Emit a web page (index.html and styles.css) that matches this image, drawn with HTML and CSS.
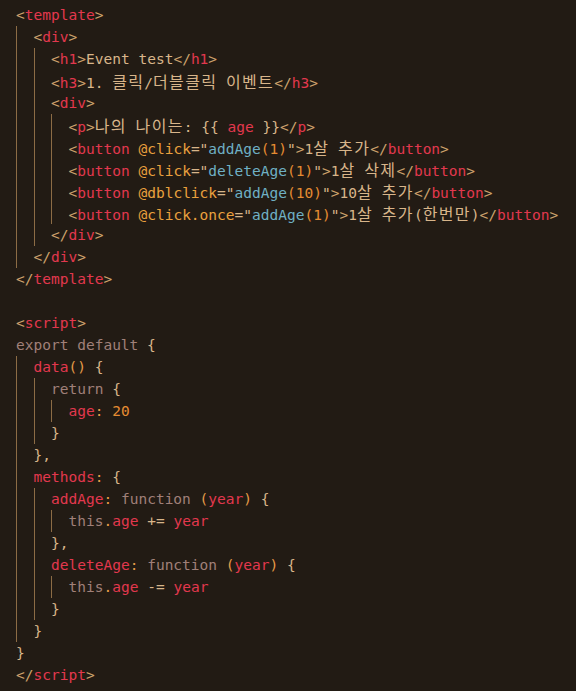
FILE: index.html
```html
<!DOCTYPE html>
<html lang="ko">
<head>
<meta charset="utf-8">
<title>Event test</title>
<link rel="stylesheet" href="styles.css">
</head>
<body>
<div class="editor">
<div class="line"><span class="b">&lt;</span><span class="t">template</span><span class="b">&gt;</span></div>
<div class="line"><span class="ind"></span><span class="b">&lt;</span><span class="t">div</span><span class="b">&gt;</span></div>
<div class="line"><span class="ind"></span><span class="ind"></span><span class="b">&lt;</span><span class="t">h1</span><span class="b">&gt;</span><span class="x">Event test</span><span class="b">&lt;/</span><span class="t">h1</span><span class="b">&gt;</span></div>
<div class="line"><span class="ind"></span><span class="ind"></span><span class="b">&lt;</span><span class="t">h3</span><span class="b">&gt;</span><span class="x">1. <span class="ko">클릭</span>/<span class="ko">더블클릭</span> <span class="ko">이벤트</span></span><span class="b">&lt;/</span><span class="t">h3</span><span class="b">&gt;</span></div>
<div class="line"><span class="ind"></span><span class="ind"></span><span class="b">&lt;</span><span class="t">div</span><span class="b">&gt;</span></div>
<div class="line"><span class="ind"></span><span class="ind"></span><span class="ind"></span><span class="b">&lt;</span><span class="t">p</span><span class="b">&gt;</span><span class="x"><span class="ko">나의</span> <span class="ko">나이는</span>: {{ </span><span class="t">age</span><span class="x"> }}</span><span class="b">&lt;/</span><span class="t">p</span><span class="b">&gt;</span></div>
<div class="line"><span class="ind"></span><span class="ind"></span><span class="ind"></span><span class="b">&lt;</span><span class="t">button</span> <span class="a">@click</span><span class="x">="</span><span class="s">addAge</span><span class="n">(1)</span><span class="x">"</span><span class="b">&gt;</span><span class="x">1<span class="ko">살</span> <span class="ko">추가</span></span><span class="b">&lt;/</span><span class="t">button</span><span class="b">&gt;</span></div>
<div class="line"><span class="ind"></span><span class="ind"></span><span class="ind"></span><span class="b">&lt;</span><span class="t">button</span> <span class="a">@click</span><span class="x">="</span><span class="s">deleteAge</span><span class="n">(1)</span><span class="x">"</span><span class="b">&gt;</span><span class="x">1<span class="ko">살</span> <span class="ko">삭제</span></span><span class="b">&lt;/</span><span class="t">button</span><span class="b">&gt;</span></div>
<div class="line"><span class="ind"></span><span class="ind"></span><span class="ind"></span><span class="b">&lt;</span><span class="t">button</span> <span class="a">@dblclick</span><span class="x">="</span><span class="s">addAge</span><span class="n">(10)</span><span class="x">"</span><span class="b">&gt;</span><span class="x">10<span class="ko">살</span> <span class="ko">추가</span></span><span class="b">&lt;/</span><span class="t">button</span><span class="b">&gt;</span></div>
<div class="line"><span class="ind"></span><span class="ind"></span><span class="ind"></span><span class="b">&lt;</span><span class="t">button</span> <span class="a">@click.once</span><span class="x">="</span><span class="s">addAge</span><span class="n">(1)</span><span class="x">"</span><span class="b">&gt;</span><span class="x">1<span class="ko">살</span> <span class="ko">추가</span>(<span class="ko">한번만</span>)</span><span class="b">&lt;/</span><span class="t">button</span><span class="b">&gt;</span></div>
<div class="line"><span class="ind"></span><span class="ind"></span><span class="b">&lt;/</span><span class="t">div</span><span class="b">&gt;</span></div>
<div class="line"><span class="ind"></span><span class="b">&lt;/</span><span class="t">div</span><span class="b">&gt;</span></div>
<div class="line"><span class="b">&lt;/</span><span class="t">template</span><span class="b">&gt;</span></div>
<div class="line"></div>
<div class="line"><span class="b">&lt;</span><span class="t">script</span><span class="b">&gt;</span></div>
<div class="line"><span class="k">export default</span> <span class="x">{</span></div>
<div class="line"><span class="ind"></span><span class="t">data</span><span class="p">()</span> <span class="x">{</span></div>
<div class="line"><span class="ind"></span><span class="ind"></span><span class="k">return</span> <span class="x">{</span></div>
<div class="line"><span class="ind"></span><span class="ind"></span><span class="ind"></span><span class="t">age</span><span class="p">:</span> <span class="n">20</span></div>
<div class="line"><span class="ind"></span><span class="ind"></span><span class="x">}</span></div>
<div class="line"><span class="ind"></span><span class="x">},</span></div>
<div class="line"><span class="ind"></span><span class="t">methods</span><span class="p">:</span> <span class="x">{</span></div>
<div class="line"><span class="ind"></span><span class="ind"></span><span class="t">addAge</span><span class="p">:</span> <span class="k">function</span> <span class="p">(</span><span class="t">year</span><span class="p">)</span> <span class="x">{</span></div>
<div class="line"><span class="ind"></span><span class="ind"></span><span class="ind"></span><span class="k">this</span><span class="p">.</span><span class="t">age</span> <span class="x">+=</span> <span class="t">year</span></div>
<div class="line"><span class="ind"></span><span class="ind"></span><span class="x">},</span></div>
<div class="line"><span class="ind"></span><span class="ind"></span><span class="t">deleteAge</span><span class="p">:</span> <span class="k">function</span> <span class="p">(</span><span class="t">year</span><span class="p">)</span> <span class="x">{</span></div>
<div class="line"><span class="ind"></span><span class="ind"></span><span class="ind"></span><span class="k">this</span><span class="p">.</span><span class="t">age</span> <span class="x">-=</span> <span class="t">year</span></div>
<div class="line"><span class="ind"></span><span class="ind"></span><span class="x">}</span></div>
<div class="line"><span class="ind"></span><span class="x">}</span></div>
<div class="line"><span class="x">}</span></div>
<div class="line"><span class="b">&lt;/</span><span class="t">script</span><span class="b">&gt;</span></div>
</div>
</body>
</html>
```
FILE: styles.css
```css
html, body {
  margin: 0;
  padding: 0;
  background: #221b14;
}
.editor {
  width: 576px;
  height: 691px;
  box-sizing: border-box;
  padding: 4px 0 0 16px;
  background: #221b14;
  font-family: "DejaVu Sans Mono", monospace;
  font-size: 14.53px;
  overflow: hidden;
}
.line {
  height: 22px;
  line-height: 22px;
  white-space: pre;
  color: #d8b58a;
}
.ind {
  display: inline-block;
  width: 17.5px;
  height: 22px;
  vertical-align: top;
  box-sizing: border-box;
  border-left: 1px solid #8c6c45;
}
.ko {
  font-family: "Noto Sans CJK KR", sans-serif;
  font-size: 16px;
  line-height: 22px;
  letter-spacing: 1.33px;
}
.b { color: #cda26c; }
.t { color: #e2384e; }
.x { color: #d8b58a; }
.a { color: #eaa13e; }
.s { color: #6fb0c4; }
.n { color: #e58c32; }
.k { color: #a08079; }
.p { color: #e49a48; }
```
